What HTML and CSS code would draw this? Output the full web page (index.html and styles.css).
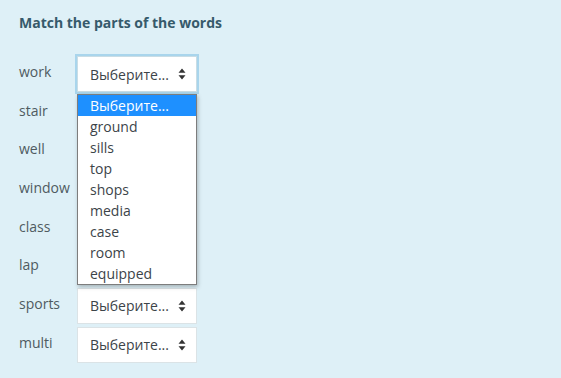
FILE: index.html
```html
<!DOCTYPE html>
<html lang="en">
<head>
  <meta charset="UTF-8" />
  <title>Match the parts of the words</title>
  <link rel="stylesheet" href="styles.css">
</head>
<body>
  <div class="question">
    <h2 class="prompt">Match the parts of the words</h2>

    <div class="rows">
      <div class="row">
        <span class="word">work</span>
        <div class="picker open">
          <div class="select focused">
            <span>Выберите...</span>
            <svg class="arrows" width="8" height="12" viewBox="0 0 8 12"><path d="M4 0.5 L7.5 4.8 H0.5 Z M4 11.5 L7.5 7.2 H0.5 Z" fill="#333"/></svg>
          </div>
          <!-- open dropdown for the first select -->
          <ul class="options">
            <li class="active">Выберите...</li>
            <li>ground</li>
            <li>sills</li>
            <li>top</li>
            <li>shops</li>
            <li>media</li>
            <li>case</li>
            <li>room</li>
            <li>equipped</li>
          </ul>
        </div>
      </div>
      <!-- these selects sit under the open list -->
      <div class="row"><span class="word">stair</span><div class="picker covered"><div class="select"><span>Выберите...</span><svg class="arrows" width="8" height="12" viewBox="0 0 8 12"><path d="M4 0.5 L7.5 4.8 H0.5 Z M4 11.5 L7.5 7.2 H0.5 Z" fill="#333"/></svg></div></div></div>
      <div class="row"><span class="word">well</span><div class="picker covered"><div class="select"><span>Выберите...</span><svg class="arrows" width="8" height="12" viewBox="0 0 8 12"><path d="M4 0.5 L7.5 4.8 H0.5 Z M4 11.5 L7.5 7.2 H0.5 Z" fill="#333"/></svg></div></div></div>
      <div class="row"><span class="word">window</span><div class="picker covered"><div class="select"><span>Выберите...</span><svg class="arrows" width="8" height="12" viewBox="0 0 8 12"><path d="M4 0.5 L7.5 4.8 H0.5 Z M4 11.5 L7.5 7.2 H0.5 Z" fill="#333"/></svg></div></div></div>
      <div class="row"><span class="word">class</span><div class="picker covered"><div class="select"><span>Выберите...</span><svg class="arrows" width="8" height="12" viewBox="0 0 8 12"><path d="M4 0.5 L7.5 4.8 H0.5 Z M4 11.5 L7.5 7.2 H0.5 Z" fill="#333"/></svg></div></div></div>
      <div class="row"><span class="word">lap</span><div class="picker covered"><div class="select"><span>Выберите...</span><svg class="arrows" width="8" height="12" viewBox="0 0 8 12"><path d="M4 0.5 L7.5 4.8 H0.5 Z M4 11.5 L7.5 7.2 H0.5 Z" fill="#333"/></svg></div></div></div>
      <div class="row"><span class="word">sports</span><div class="picker"><div class="select"><span>Выберите...</span><svg class="arrows" width="8" height="12" viewBox="0 0 8 12"><path d="M4 0.5 L7.5 4.8 H0.5 Z M4 11.5 L7.5 7.2 H0.5 Z" fill="#333"/></svg></div></div></div>
      <div class="row"><span class="word">multi</span><div class="picker"><div class="select"><span>Выберите...</span><svg class="arrows" width="8" height="12" viewBox="0 0 8 12"><path d="M4 0.5 L7.5 4.8 H0.5 Z M4 11.5 L7.5 7.2 H0.5 Z" fill="#333"/></svg></div></div></div>
    </div>
  </div>
</body>
</html>
```

FILE: styles.css
```css
body {
  margin: 0;
  background-color: #def0f7;
  font-family: "Open Sans", Arial, sans-serif;
  min-height: 100vh;
}

.question {
  padding: 13px 19px;
}

.prompt {
  margin: 0;
  font-size: 14px;
  font-weight: bold;
  color: #365a6b;
  line-height: 20px;
}

.rows {
  margin-top: 23px;
  display: flex;
  flex-direction: column;
  gap: 2.67px;
}

.row {
  display: flex;
  align-items: flex-start;
}

.word {
  width: 58px;
  font-size: 14px;
  color: #4f5b61;
  line-height: 20px;
  padding-top: 6px;
}

.picker {
  position: relative;
}

.picker.covered .select {
  visibility: hidden;
}

.select {
  box-sizing: border-box;
  width: 120px;
  height: 36px;
  display: flex;
  align-items: center;
  justify-content: space-between;
  padding: 0 10px 0 12px;
  background: #fff;
  border: 1px solid #dbe3e6;
  font-size: 14px;
  color: #3c4449;
}

.select.focused {
  border-color: #c9dde5;
  box-shadow: 0 0 0 2px #a9d5ec;
}

.options {
  position: absolute;
  top: 38px;
  left: 0;
  width: 120px;
  box-sizing: border-box;
  margin: 0;
  padding: 0;
  list-style: none;
  background: #fff;
  border: 1px solid #7d7d7d;
  box-shadow: 1px 2px 4px rgba(0, 0, 0, 0.25);
  z-index: 2;
}

.options li {
  height: 21px;
  line-height: 21px;
  padding-left: 12px;
  font-size: 14px;
  color: #3c4449;
}

.options li.active {
  background: #1e90ff;
  color: #fff;
}
```
